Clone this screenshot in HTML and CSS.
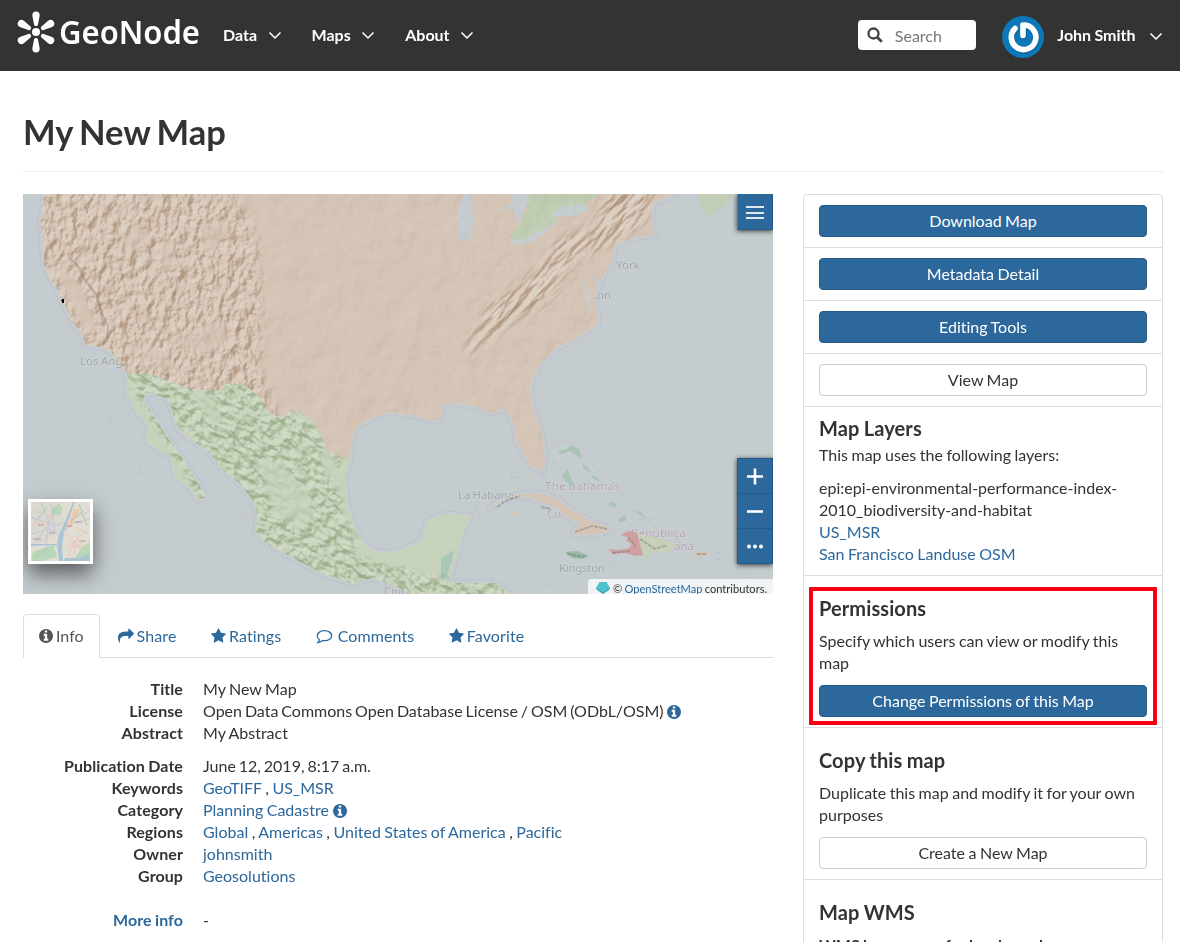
FILE: index.html
```html
<!DOCTYPE html>
<html lang="en">
<head>
<meta charset="utf-8">
<title>My New Map - GeoNode</title>
<link rel="stylesheet" href="styles.css">
</head>
<body>
<svg class="defs" width="0" height="0" aria-hidden="true">
  <symbol id="info" viewBox="0 128 1536 1536"><path d="M1024 1376v-160q0-14-9-23t-23-9h-96v-512q0-14-9-23t-23-9h-320q-14 0-23 9t-9 23v160q0 14 9 23t23 9h96v320h-96q-14 0-23 9t-9 23v160q0 14 9 23t23 9h448q14 0 23-9t9-23zm-128-896v-160q0-14-9-23t-23-9h-192q-14 0-23 9t-9 23v160q0 14 9 23t23 9h192q14 0 23-9t9-23zm640 416q0 209-103 385.500t-279.500 279.500-385.500 103-385.500-103-279.500-279.500-103-385.500 103-385.500 279.500-279.500 385.500-103 385.500 103 279.500 279.500 103 385.500z"/></symbol>
  <symbol id="star" viewBox="0 0 1664 1664"><path d="M1664 647q0 22-26 48l-363 354 86 500q1 7 1 20 0 21-10.500 35.500t-30.500 14.500q-19 0-40-12l-449-236-449 236q-22 12-40 12-21 0-31.500-14.500t-10.500-35.500q0-6 2-20l86-500-364-354q-25-27-25-48 0-37 56-46l502-73 225-455q19-41 49-41t49 41l225 455 502 73q56 9 56 46z"/></symbol>
  <symbol id="share" viewBox="0 0 1792 1792"><path d="M1792 640q0 26-19 45l-512 512q-19 19-45 19t-45-19-19-45v-256h-224q-98 0-175.500 6t-154 21.500-133 42.500-105.500 69.500-80 101-48.500 138.500-17.500 181q0 55 5 123 0 6 2.500 23.500t2.500 26.500q0 15-8.500 25t-23.500 10q-16 0-28-17-7-9-13-22t-13.500-30-10.500-24q-127-285-127-451 0-199 53-333 162-403 875-403h224v-256q0-26 19-45t45-19 45 19l512 512q19 19 19 45z"/></symbol>
  <symbol id="chev" viewBox="0 0 14 9"><path d="M1.500 1.500 7 7l5.500-5.500" fill="none" stroke="currentColor" stroke-width="1.500"/></symbol>
</svg>

<header class="topbar">
  <a class="brand" href="#">
    <svg width="190" height="70" viewBox="15 0 190 70">
      <g fill="#fff">
        <circle cx="36" cy="32" r="4"/>
        <path id="petal" d="M34 24.500 32.300 15.500a3.700 4 0 1 1 7.400 0L38 24.500a2 1.500 0 0 1-4 0z"/>
        <use href="#petal" transform="rotate(60 36 32)"/><use href="#petal" transform="rotate(120 36 32)"/>
        <use href="#petal" transform="rotate(180 36 32)"/><use href="#petal" transform="rotate(240 36 32)"/>
        <use href="#petal" transform="rotate(300 36 32)"/>
        <text class="wordmark" x="59" y="43.500" textLength="141" lengthAdjust="spacingAndGlyphs">GeoNode</text>
      </g>
    </svg>
  </a>
  <nav class="menu">
    <a href="#">Data <svg width="14" height="9"><use href="#chev"/></svg></a>
    <a href="#">Maps <svg width="14" height="9"><use href="#chev"/></svg></a>
    <a href="#">About <svg width="14" height="9"><use href="#chev"/></svg></a>
  </nav>
  <div class="search">
    <svg width="16" height="16" viewBox="0 0 16 16" fill="none" stroke="#444"><circle cx="6.500" cy="6.500" r="5" stroke-width="2.300"/><path d="m10.200 10.200 4.600 4.600" stroke-width="2.800"/></svg>
    <span>Search</span>
  </div>
  <a class="user" href="#">
    <svg class="avatar" width="42" height="42" viewBox="0 0 42 42">
      <circle cx="21" cy="21" r="21" fill="#0d78b9"/>
      <path d="M13 12.500A12.300 12.300 0 1 0 21 9v10.500" transform="translate(.7 1)" fill="none" stroke="#07558b" stroke-opacity=".6" stroke-width="6" stroke-linecap="round" stroke-linejoin="round"/>
      <path d="M13 12.500A12.300 12.300 0 1 0 21 9v10.500" fill="none" stroke="#fff" stroke-width="5.600" stroke-linecap="round" stroke-linejoin="round"/>
    </svg>
    <span>John Smith</span>
    <svg width="14" height="9"><use href="#chev"/></svg>
  </a>
</header>

<main class="page">
  <h1>My New Map</h1>
  <div class="columns">
    <section class="main">
      <div class="map">
        <svg class="tiles" width="750" height="400" viewBox="23 194 750 400">
          <defs>
            <filter id="reliefNS" x="0" y="0" width="100%" height="100%" color-interpolation-filters="sRGB">
              <feTurbulence type="fractalNoise" baseFrequency=".12 .08" numOctaves="4" seed="7"/>
              <feColorMatrix values="0 0 0 0 0 0 0 0 0 0 0 0 0 0 0 1 0 0 0 0"/>
              <feDiffuseLighting surfaceScale="5.500" diffuseConstant=".72" lighting-color="#fff"><feDistantLight azimuth="225" elevation="45"/></feDiffuseLighting>
            </filter>
            <filter id="relief" x="0" y="0" width="100%" height="100%" color-interpolation-filters="sRGB">
              <feTurbulence type="fractalNoise" baseFrequency=".04 .17" numOctaves="3" seed="12"/>
              <feColorMatrix values="0 0 0 0 0 0 0 0 0 0 0 0 0 0 0 1 0 0 0 0"/>
              <feDiffuseLighting surfaceScale="6" diffuseConstant=".72" lighting-color="#fff"><feDistantLight azimuth="270" elevation="45"/></feDiffuseLighting>
            </filter>
            <filter id="reliefMex" x="0" y="0" width="100%" height="100%" color-interpolation-filters="sRGB">
              <feTurbulence type="fractalNoise" baseFrequency=".09 .16" numOctaves="3" seed="5"/>
              <feColorMatrix values="0 0 0 0 0 0 0 0 0 0 0 0 0 0 0 1 0 0 0 0"/>
              <feDiffuseLighting surfaceScale="7" diffuseConstant=".72" lighting-color="#fff"><feDistantLight azimuth="200" elevation="45"/></feDiffuseLighting>
            </filter>
            <filter id="plain" x="0" y="0" width="100%" height="100%" color-interpolation-filters="sRGB">
              <feTurbulence type="fractalNoise" baseFrequency=".04" numOctaves="4" seed="3"/>
              <feColorMatrix values="0 0 0 0 0 0 0 0 0 0 0 0 0 0 0 1 0 0 0 0"/>
              <feDiffuseLighting surfaceScale="3" diffuseConstant=".71" lighting-color="#fff"><feDistantLight azimuth="225" elevation="45"/></feDiffuseLighting>
            </filter>
            <filter id="soft" x="-20%" y="-20%" width="140%" height="140%"><feGaussianBlur stdDeviation="6"/></filter>
            <filter id="soft2" x="-20%" y="-20%" width="140%" height="140%"><feGaussianBlur stdDeviation="2.500"/></filter>
            <path id="usa" d="M44 194l-1 16-3 12 3 16-1 8 2 11-1 6 7 15 8 12 4 11 6 11 5 11 9 10 2 12 18 2 10 6 11 14 4 6h20l46 17h30l3-6h18l16 14 8 14 12 6 12-8 15 5 15 20 6 17 22 7 1-19 6-13 16-10 17-5 22 3 16 5h10l4-5-2-8 5-4 17 1 16 3 12 6 12-5 8 7 5 12 1 13 7 13 9 14 10 3 3-8-3-29-10-26-2-17 3-13 9-15 16-15 14-7 16-9 9-7 1-10-4-15 8-22 10-15 3-17 20-8 20-2-4-11 2-20 19-9 23-14z"/>
            <path id="mex" d="M127 373h20l46 17h30l3-6h18l16 14 8 14 12 6 12-8 15 5 15 20 6 17 22 7-5 18 2 26 10 30 13 17 13 3 17-2 22-10 5-20 18-7 25 2-7 15-5 20-10 32h47l15 12H410l-10-7-27-10-20 6-33-11-27-15-26-14-12-13 3-13-5-17-13-17-20-16-10-15-17-12-15-12-10-30-21-7-4 8 12 18 12 19 15 21 13 20 11 19-8 3-10-15-13-7-3-20-14-8-13-11 4-8-1-8-12-12-9-18z"/>
            <path id="cuba" d="M490 509l8-7 13-6 18-3 15 1 16 7 10 8 18 11 22 9-10 5-27 1 8-12-15-7-9-8-14-5-15-7-17 1-10 4z"/>
            <path id="hisp" d="M637 533l11 3 14 2 16 8-11 6-14-1-7 9-3-7z"/>
            <path id="haiti" d="M637 533l-5-2-6 1-5 3 9 3-5 2 7 4-3 4-9 2-12-1 5 5 12-1 11 3 7-1z"/>
            <path id="jam" d="M565 552l12-1 12 5-7 3-10-1z"/>
            <clipPath id="land"><use href="#usa"/></clipPath>
            <clipPath id="landMex"><use href="#mex"/></clipPath>
            <mask id="west" maskUnits="userSpaceOnUse" x="23" y="194" width="750" height="400">
              <path d="M35 185h150l20 15 30-10 15 30 8 30 4 60 0 60 25 75-40-30-80-10-50-10-60-60-30-70z" fill="#fff" filter="url(#soft)"/>
              <path d="M61 263l20 24 17 43-9 5-17-27-14-33z" fill="#000" filter="url(#soft2)"/>
              <path d="M161 245l12-8v28l-12 10zM135 220l15 15-20 20-4-18zM200 222l35 8-30 25zM175 340l40-20 20 20-30 15zM130 345l30 5 20 20-20-2z" fill="#555" filter="url(#soft2)"/>
            </mask>
            <mask id="appal" maskUnits="userSpaceOnUse" x="23" y="194" width="750" height="400">
              <path d="M605 190l50-2-12 36-36 22-32 12-28 45-44 25-32 27-5-8 25-45 35-20 28-40 42-18z" fill="#fff" filter="url(#soft)"/>
            </mask>
            <mask id="sierra" maskUnits="userSpaceOnUse" x="23" y="194" width="750" height="400">
              <path d="M127 370h65l80 20 70 60 0 60 24 45 60 20 85 8v30H330l-80-45 5-40-60-70-22-26 40 66-10 8-70-115z" fill="#fff" filter="url(#soft2)"/>
              <path d="M172 418l86 90-8 10-75-85zM322 440l24 40v20l-20-30zM350 545l50 12-5 10-40-12zM420 568l20-83h20l-15 85zM175 455l10 15-4 3z" fill="#000" filter="url(#soft2)"/>
              <path d="M258 460l25 5 30 35-5 25-30-10zM190 395l20 0 10 20-10 8z" fill="#444" filter="url(#soft2)"/>
            </mask>
          </defs>
          <rect x="23" y="194" width="750" height="400" fill="#c5cccf"/>
          <g fill="#c5cccf" stroke="#bfbdcb" stroke-width="7" stroke-linejoin="round"><use href="#usa"/><use href="#mex"/><use href="#cuba"/></g>
          <g fill="#c5cccf" stroke="#c5cccf" stroke-width="5.400" stroke-linejoin="round"><use href="#usa"/><use href="#mex"/><use href="#cuba"/></g>
          <g class="coast">
            <path d="M546 487l1-30 8-14 12-3 15 7 14 22 18 14 15 22 15 10 15 18 18 2 5 12M539 483l5-12M616 540l20-20 22-3 15 8 4 18-9 15M110 413l2 10-5-2-1-5zM140 468l-3 5 5 0zM242 510l7 8-4 1-5-6zM193 541l-5 4 5 4 4-5zM197 539l3 3M450 544l-6-5-6 2 4 5zM475 520l5-4 2 6-6 2zM511 473l5-1 2 5-6 1zM475 508l4-6-4 8zM610 568l4-5 3 6zM545 585l4-4 1 6z"/>
            <path d="M717 376l6-4 2 3-5 5zM735 570l15 8 8 16M700 205l8 13 18-13"/>
          </g>
          <g class="place">
            <text x="80" y="365" textLength="64">Los Angeles</text><text x="616" y="269">York</text><text x="586" y="299" textLength="25">gton</text>
            <text x="458" y="499" textLength="56">La Habana</text><text x="559" y="572" textLength="46">Kingston</text><text x="384" y="595">Ciudad</text>
            <g class="country"><text x="545" y="490" textLength="75">The Bahamas</text><text x="547" y="518">Cu</text><text x="631" y="537" textLength="55">República</text><text x="674" y="550">ana</text></g>
          </g>
          <use href="#usa" fill="#d5c5b6"/>
          <use href="#mex" fill="#c7d2bb"/>
          <path d="M441 558l13-8-3 14-6 17h-4z" fill="#aac8ba"/>
          <path d="M463 194l-5 16v27l5 6 8-5 3-18-4-26zM509 194l4 9-10 7 11-1 3 16 14-31zM509 239l7 6 18-4 24-20-20 6-24 9z" fill="#c5cccf"/>
          <path d="M528 194l-1 16-9 17-8 10 8 4 24-11 16-9-3-9 30-7 13-11z" fill="#c1cdb3"/>
          <path d="M553 212l9-5 23-3 4 6-15 6-21 1z" fill="#c5cccf"/>
          <path d="M697 194h39l-17 16-11 7-6-7z" fill="#c2cdb6"/>
          <path d="M595 276l3 8-1 10M584 282l4 18 2 10M620 252l18-5-15 7M602 279l-4 12" fill="none" stroke="#c5cccf" stroke-width="2.500"/>
          <use href="#cuba" fill="#d5c5b6"/><path d="M692 552l12-1 5 2-5 4h-10zM510 513l8-2 5 3-9 1zM527 475l10-2-5 3z" fill="#d5c5b6"/>
          <path d="M717 553l5-1M717 560l4-1" stroke="#aac8ba"/>
          <use href="#hisp" fill="#c5d0b8"/><use href="#haiti" fill="#cfa0a1"/><use href="#jam" fill="#97baa7"/>
          <g fill="#a9c4b5"><path d="M557 451l8-1 7-5 8 5 1 9-5-4-6-4-8 3zM567 468l6 15 2 5-10-7-3-4zM583 464l5 3 2 6-7-5zM591 474l7 4 3 5-8-5zM609 501l8 3-2 4-6-3zM619 519l7-5v7l-8 1zM631 510l10 2 4 7-7-6zM553 462l2-2v4zM584 477l8 7 8 6-8-4zM600 490l5 5 2 2z"/></g>
          <g clip-path="url(#land)" class="shade">
            <g class="faint"><rect x="23" y="194" width="750" height="400" filter="url(#plain)"/></g>
          </g>
          <g clip-path="url(#land)" class="shade">
            <g mask="url(#west)"><rect x="23" y="194" width="300" height="270" filter="url(#reliefNS)"/></g>
            <g mask="url(#appal)" class="medium"><rect x="250" y="40" width="600" height="500" transform="rotate(-48 560 280)" filter="url(#relief)"/></g>
          </g>
          <g clip-path="url(#landMex)" class="shade">
            <g mask="url(#sierra)"><rect x="40" y="240" width="560" height="520" transform="rotate(48 300 480)" filter="url(#reliefMex)"/></g>
          </g>
          <g class="ridge">
            <path d="M70 258l8 8 8 16 10 12 6 20 6 12-1 12"/>
          </g>
          <g class="islandRelief"><path d="M497 507l8-6 15-5M541 507l10 2M575 532l17-6 15 3M567 554l18 3M612 553l18-2M628 537l8 10M640 539l15 10 12-4M697 554h10"/></g>
          <path d="M62 299h2v4h-2zM61 300h1v1h-1z" fill="#000"/>
        </svg>
        <div class="ctl ctl-menu"><svg width="20" height="16" viewBox="0 0 20 16" stroke="#dfe9f1" stroke-width="2"><path d="M1 3h18M1 9h18M1 14h18"/></svg></div>
        <div class="ctl-stack">
          <div class="ctl"><svg width="20" height="20" viewBox="0 0 20 20" stroke="#fff" stroke-width="2.600"><path d="M2 10.500h16M10 2.500v16"/></svg></div>
          <div class="ctl"><svg width="20" height="20" viewBox="0 0 20 20" stroke="#fff" stroke-width="2.600"><path d="M2 10.500h16"/></svg></div>
          <div class="ctl"><svg width="20" height="20" viewBox="0 0 20 20" fill="#fff"><circle cx="4" cy="10.500" r="2"/><circle cx="10" cy="10.500" r="2"/><circle cx="16" cy="10.500" r="2"/></svg></div>
        </div>
        <div class="thumb">
          <svg width="59" height="59" viewBox="0 0 59 59">
            <rect width="59" height="59" fill="#e2ddd2"/>
            <path d="M0 0h30l3 20-9 16-24 8z" fill="#d9d8d1"/><path d="M22 5l10-1-3 10-8-3zM2 50l20-7 4 12-15 4H0zM51 45l8-5v19H42z" fill="#b7d7b7"/>
            <path d="M42 0l-9 22-5 10-2 10 2 17h4l-1-14 2-15 11-30zM0 42h27l1 1-28 1zM34 56l14 0 11-4v7H32z" fill="#a9c5d4"/>
            <path d="M43 7l-8 22 8-10 6-12z" fill="#f1c6a5"/>
            <g fill="none" stroke-width="1"><path d="M0 32l18-5 10 6 15-12 16-4M10 0l8 20-5 39M0 15l25 9 34-15M5 40l20-30M20 0l4 30" stroke="#c6c5da"/><path d="M33 30l10 10-6 14M45 25l14 8M42 46l17-9M0 23l20-5M37 40l18 8M2 8l20 8M47 30l-4 22M34 48l20-18" stroke="#eac4ba"/><path d="M4 20l12-15M28 2l-8 12M48 2l8 22M40 20l12-12M3 56l14-10" stroke="#a8cdae"/><path d="M7 23h6M35 24h6M18 31h6M2 37h8M44 20h7M48 39h6" stroke="#a06f86" stroke-opacity=".6"/></g>
          </svg>
        </div>
        <div class="credit">
          <svg width="16" height="14" viewBox="0 0 16 14"><path d="M1.500 8.500 8 13l6.500-4.500V6h-13z" fill="#32929f"/><path d="M1 7l3.500-6h7L15 7l-7 5z" fill="#4cc3cf"/></svg>
          <span>© <a href="#">OpenStreetMap</a> contributors.</span>
        </div>
      </div>

      <ul class="tabs">
        <li class="active"><svg width="14" height="14"><use href="#info"/></svg>Info</li>
        <li><svg width="16" height="16"><use href="#share"/></svg>Share</li>
        <li><svg width="15" height="15"><use href="#star"/></svg>Ratings</li>
        <li class="wide"><svg width="17" height="16" viewBox="0 0 17 16" fill="none" stroke="currentColor" stroke-width="1.300"><path d="M8.500 2.700c4 0 7.200 2.200 7.200 5s-3.200 5-7.200 5q-1 0-2-.2-2 1.900-4.700 2.200 1.300-1.200 1.600-3C2 10.800 1.300 9.300 1.300 7.700c0-2.800 3.200-5 7.200-5z"/></svg>Comments</li>
        <li><svg width="15" height="15"><use href="#star"/></svg>Favorite</li>
      </ul>

      <dl class="facts">
        <dt>Title</dt><dd>My New Map</dd>
        <dt>License</dt><dd class="license">Open Data Commons Open Database License / OSM (ODbL/OSM) <svg width="14" height="14"><use href="#info"/></svg></dd>
        <dt>Abstract</dt><dd>My Abstract</dd>
      </dl>
      <dl class="facts">
        <dt>Publication Date</dt><dd class="date">June 12, 2019, 8:17 a.m.</dd>
        <dt>Keywords</dt><dd><a href="#">GeoTIFF</a> , <a href="#">US_MSR</a></dd>
        <dt>Category</dt><dd><a href="#">Planning Cadastre</a> <svg width="14" height="14"><use href="#info"/></svg></dd>
        <dt>Regions</dt><dd><a href="#">Global</a> , <a href="#">Americas</a> , <a href="#">United States of America</a> , <a href="#">Pacific</a></dd>
        <dt>Owner</dt><dd><a href="#">johnsmith</a></dd>
        <dt>Group</dt><dd><a href="#">Geosolutions</a></dd>
      </dl>
      <dl class="facts more"><dt><a href="#">More info</a></dt><dd>-</dd></dl>
    </section>

    <aside class="side">
      <ul class="list">
        <li><a class="btn primary" href="#">Download Map</a></li>
        <li><a class="btn primary" href="#">Metadata Detail</a></li>
        <li><a class="btn primary" href="#">Editing Tools</a></li>
        <li><a class="btn" href="#">View Map</a></li>
        <li class="layers">
          <h2>Map Layers</h2>
          <p class="lead">This map uses the following layers:</p>
          <p>epi:epi-environmental-performance-index-2010_biodiversity-and-habitat<br><a href="#">US_MSR</a><br><a href="#">San Francisco Landuse OSM</a></p>
        </li>
        <li class="block">
          <h2>Permissions</h2>
          <p>Specify which users can view or modify this map</p>
          <a class="btn primary" href="#">Change Permissions of this Map</a>
          <div class="highlight"></div>
        </li>
        <li class="block">
          <h2>Copy this map</h2>
          <p>Duplicate this map and modify it for your own purposes</p>
          <a class="btn" href="#">Create a New Map</a>
        </li>
        <li class="block">
          <h2>Map WMS</h2>
          <p><b>WMS layer group for local map layers</b></p>
        </li>
      </ul>
    </aside>
  </div>
</main>
</body>
</html>
```
FILE: styles.css
```css
* { box-sizing: border-box; }
html, body { height: 942px; overflow: hidden; }
body { margin: 0; background: #fff; color: #333; font: 16px/22px Lato, sans-serif; word-spacing: -.6px; font-variant-ligatures: none; }
a { color: #2c689c; text-decoration: none; }
ul, dl, dd, p, h1, h2 { margin: 0; padding: 0; }
ul { list-style: none; }
svg { display: block; flex: none; }
svg:not([fill]) { fill: currentColor; }
.defs { position: absolute; }

.topbar { height: 71px; background: #333; display: flex; align-items: flex-start; padding: 0 17px 0 15px; color: #fff; font-weight: 700; }
.topbar a { color: #fff; }
.brand { width: 208px; }
.wordmark { font: 600 32px "Noto Sans", "Open Sans", sans-serif; }
.menu { display: flex; gap: 30px; padding-top: 24px; }
.menu a { display: flex; align-items: center; gap: 10.500px; }
.search { width: 118px; height: 30px; margin: 20px 26px 0 auto; background: #fff; border-radius: 4px; display: flex; align-items: center; gap: 12px; padding: 2px 9px 0; font-weight: 400; color: #777; }
.search svg { margin-top: -2px; }
.user { display: flex; align-items: flex-start; padding-top: 16px; }
.user span { margin: 8px 13.500px 0 13.500px; }
.user svg:last-child { margin-top: 16px; }

.page { padding: 0 17px 0 23px; }
h1 { font-size: 34.500px; word-spacing: -2px; line-height: 40px; padding: 41px 0 19px; border-bottom: 1px solid #eee; }
.columns { display: grid; grid-template-columns: 750px 360px; gap: 30px; padding-top: 22px; }

.map { position: relative; height: 400px; overflow: hidden; }
.coast { fill: none; stroke: #bfbdcb; stroke-width: .7; }
.place { font: 11.500px "Noto Sans", sans-serif; fill: #9fa5a9; paint-order: stroke; stroke: #cfd5d7; stroke-width: 1.500px; }
.country { fill: #b7a5b6; }
.shade { mix-blend-mode: soft-light; }
.faint { opacity: .4; }
.ridge { fill: none; stroke: #978a7d; stroke-opacity: .45; stroke-width: 2; }
.islandRelief { fill: none; stroke: #77766b; stroke-opacity: .45; stroke-width: 1.800; stroke-dasharray: 4 1; }
.ctl { width: 36px; height: 35px; background: #2c689c; border: 1px solid #235a8b; border-top-width: 0; display: flex; align-items: center; justify-content: center; }
.ctl-menu { position: absolute; top: 0; right: 0; height: 36px; border-left-color: #16a0a4; box-shadow: 0 1px 5px rgba(0, 0, 0, .75); }
.ctl-stack { position: absolute; right: 0; top: 264px; border-top: 1px solid #235a8b; box-shadow: 0 1px 5px rgba(0, 0, 0, .75); }
.thumb { position: absolute; left: 5px; top: 305px; border: 3px solid #fff; box-shadow: 0 10px 20px rgba(0, 0, 0, .55); }
.credit { position: absolute; right: 0; bottom: 0; width: 185px; height: 15px; display: flex; gap: 2px; padding: 2px 0 0 7px; background: #f1f4f4; font-size: 11.100px; line-height: 16px; border-top-left-radius: 3px; white-space: nowrap; }

.tabs { display: flex; margin-top: 20px; height: 44px; border-bottom: 1px solid #ddd; color: #2c689c; }
.tabs li { display: flex; align-items: center; gap: 3px; padding: 0 15px; margin: 0 2.500px 0 0; border: 1px solid transparent; letter-spacing: .1px; }
.tabs li.active { height: 44px; margin-right: 2px; color: #555; border-color: #ddd; border-bottom-color: #fff; border-radius: 4px 4px 0 0; letter-spacing: 0; }
.tabs li.wide { gap: 5px; }

.facts { display: grid; grid-template-columns: 160px 1fr; column-gap: 20px; grid-auto-rows: 22px; margin-top: 20px; }
.facts + .facts { margin-top: 11px; }
.facts + .more { margin-top: 22px; }
.facts dt { text-align: right; font-weight: 700; letter-spacing: .08px; }
.facts svg { display: inline-block; vertical-align: -1.500px; margin-left: 1px; color: #2c689c; }
.facts .license { word-spacing: -1.200px; }
.facts .date { word-spacing: -1.200px; }

.list { border: 1px solid #ddd; border-radius: 4px; }
.list li { position: relative; padding: 10px 15px; border-bottom: 1px solid #ddd; }
.btn { display: block; height: 32px; line-height: 30px; text-align: center; border: 1px solid #ccc; border-radius: 4px; color: #333; }
.primary { background: #2c689c; border-color: #265a87; color: #fff; }
h2 { font-size: 20px; line-height: 22px; font-weight: 700; letter-spacing: .1px; }
.list li.layers { padding: 10px 15px; }
.layers .lead { margin: 5px 0 11px; }
.list li.block { padding-top: 21px; }
.block h2 { margin-bottom: 11px; }
.block p { margin-bottom: 11px; }
.highlight { position: absolute; left: 5px; top: 11px; width: 348px; height: 138px; border: 4px solid #f50015; }
```
